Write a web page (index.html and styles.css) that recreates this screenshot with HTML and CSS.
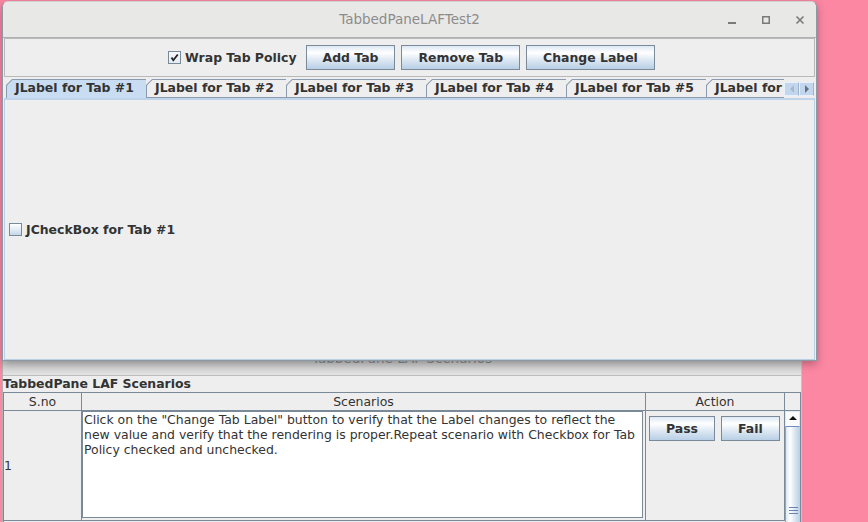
FILE: index.html
```html
<!DOCTYPE html>
<html>
<head>
<meta charset="utf-8">
<title>TabbedPaneLAFTest2</title>
<link rel="stylesheet" href="styles.css">
</head>
<body>
<div class="win back">
  <div class="back-title">TabbedPane LAF Scenarios</div>
  <div class="back-body">
    <div class="sc-label">TabbedPane LAF Scenarios</div>
    <div class="table">
      <div class="thead">
        <div class="th c-sno">S.no</div>
        <div class="th c-sc">Scenarios</div>
        <div class="th c-act">Action</div>
        <div class="th c-corner"></div>
      </div>
      <div class="trow">
        <div class="td c-sno sno">1</div>
        <div class="td c-sc sc">
          <div class="textarea">Click on the "Change Tab Label" button to verify that the Label changes to reflect the<br>new value and verify that the rendering is proper.Repeat scenario with Checkbox for Tab<br>Policy checked and unchecked.</div>
        </div>
        <div class="td c-act act">
          <button class="btn">Pass</button>
          <button class="btn">Fail</button>
        </div>
        <div class="vscroll">
          <div class="vs-up"><span class="tri-up"></span></div>
          <div class="vs-thumb"><span class="grip"></span><span class="grip"></span><span class="grip"></span></div>
        </div>
      </div>
    </div>
  </div>
</div>

<div class="win front">
  <div class="titlebar">
    <span class="title">TabbedPaneLAFTest2</span>
    <div class="wm">
      <svg viewBox="0 0 24 24" width="24" height="24"><path d="M8 15H16" stroke="#7a7a7a" stroke-width="2" fill="none"/></svg>
      <svg viewBox="0 0 24 24" width="24" height="24"><rect x="8.75" y="8.75" width="6.5" height="6.5" stroke="#7a7a7a" stroke-width="1.5" fill="none"/></svg>
      <svg viewBox="0 0 24 24" width="24" height="24"><path d="M8.5 8.5L15.5 15.5M15.5 8.5L8.5 15.5" stroke="#7a7a7a" stroke-width="1.6" fill="none"/></svg>
    </div>
  </div>
  <div class="frame-body">
    <div class="toolbar">
      <label class="chk wrap">
        <span class="box"><svg viewBox="0 0 11 11" width="11" height="11"><path d="M2.5 5.5L4.3 8.2L8.8 2.5" stroke="#222" stroke-width="1.8" fill="none"/></svg></span>
        Wrap Tab Policy
      </label>
      <button class="btn">Add Tab</button>
      <button class="btn">Remove Tab</button>
      <button class="btn">Change Label</button>
    </div>
    <div class="tabstrip">
      <div class="tabs">
        <div class="tab sel"><div class="tab-in">JLabel for Tab #1</div></div>
        <div class="tab"><div class="tab-in">JLabel for Tab #2</div></div>
        <div class="tab"><div class="tab-in">JLabel for Tab #3</div></div>
        <div class="tab"><div class="tab-in">JLabel for Tab #4</div></div>
        <div class="tab"><div class="tab-in">JLabel for Tab #5</div></div>
        <div class="tab"><div class="tab-in">JLabel for Tab #6</div></div>
      </div>
      <div class="tab-scroll">
        <span class="sbtn"><span class="tri-left"></span></span>
        <span class="sbtn"><span class="tri-right"></span></span>
      </div>
    </div>
    <div class="tab-content">
      <label class="chk">
        <span class="box plain"></span>
        JCheckBox for Tab #1
      </label>
    </div>
  </div>
</div>
</body>
</html>
```

FILE: styles.css
```css
* { box-sizing: border-box; }
html, body { margin: 0; padding: 0; }
body {
  width: 868px;
  height: 522px;
  overflow: hidden;
  position: relative;
  background: #fc87a3;
  font-family: "DejaVu Sans", sans-serif;
  font-size: 12.45px;
  color: #333;
}

.win { position: absolute; background: #eeeeee; }

/* ---------- back window ---------- */
.back {
  left: 2px;
  top: 340px;
  width: 800px;
  height: 200px;
  border-left: 1px solid #b0b0b0;
  border-right: 1px solid #c4c4c4;
  display: flex;
  flex-direction: column;
}
.back-title {
  height: 36px;
  flex: none;
  background: linear-gradient(to bottom, #c9c9c9 58%, #e3e3e3 100%);
  border-bottom: 1px solid #bdbdbd;
  display: flex;
  align-items: center;
  justify-content: center;
  font-size: 13.5px;
  color: #8c8c8c;
  padding-top: 1px;
}
.back-body { display: flex; flex-direction: column; }
.sc-label { height: 16px; line-height: 15px; font-weight: bold; color: #333; }
.table { border-left: 1px solid #7a8a99; width: 798px; }
.thead, .trow { display: flex; }
.th {
  height: 19px;
  border-top: 1px solid #7a8a99;
  border-bottom: 1px solid #7a8a99;
  border-right: 1px solid #7a8a99;
  background: #eeeeee;
  text-align: center;
  line-height: 17px;
}
.c-sno { width: 78px; flex: none; }
.c-sc { width: 564px; flex: none; }
.c-act { width: 139px; flex: none; }
.c-corner { width: 16px; flex: none; }
.td {
  height: 110px;
  border-right: 1px solid #7a8a99;
  border-bottom: 1px solid #7a8a99;
}
.sno { display: flex; align-items: center; padding-left: 0; }
.sc { padding: 0 2px 2px 0; }
.textarea {
  height: 100%;
  background: #fff;
  border: 1px solid #7a8a99;
  padding-left: 1px;
  line-height: 15px;
  white-space: nowrap;
  overflow: hidden;
  color: #333;
}
.act { display: flex; align-items: flex-start; gap: 6px; padding: 5px 0 0 3px; }

.vscroll {
  width: 16px;
  flex: none;
  height: 111px;
  border-right: 1px solid #7a8a99;
  display: flex;
  flex-direction: column;
}
.vs-up {
  height: 16px;
  flex: none;
  background: #fafbfd;
  border: 1px solid #e2e8f0;
  border-bottom: 1px solid #6f8cc0;
  display: flex;
  justify-content: center;
  padding-top: 4px;
}
.tri-up {
  width: 0; height: 0;
  border-left: 4px solid transparent;
  border-right: 4px solid transparent;
  border-bottom: 4px solid #111;
}
.vs-thumb {
  flex: 1;
  border-left: 1px solid #8ea6cf;
  background: linear-gradient(to right, #dde8f3 0%, #ffffff 30%, #dde8f3 60%, #b8cfe5 100%);
  display: flex;
  flex-direction: column;
  align-items: center;
  gap: 2px;
  padding-top: 80px;
}
.grip { width: 9px; height: 1px; background: #6c83b2; flex: none; }

/* ---------- buttons ---------- */
.btn {
  height: 25px;
  padding: 0 16px;
  margin: 0;
  border: 1px solid #7a8a99;
  border-radius: 0;
  background: linear-gradient(to bottom, #dde8f3 0%, #ffffff 30%, #dde8f3 60%, #b8cfe5 100%);
  font-family: "DejaVu Sans", sans-serif;
  font-weight: bold;
  font-size: 12.45px;
  color: #333;
  flex: none;
}

/* ---------- front window ---------- */
.front {
  left: 2px;
  top: 1px;
  width: 815px;
  height: 360px;
  border: 1px solid #8d98a5;
  border-top-color: #d0d0d0;
  border-radius: 6px 6px 0 0;
  box-shadow: 0 3px 10px rgba(0, 0, 0, 0.3);
  display: flex;
  flex-direction: column;
  overflow: hidden;
}
.titlebar {
  height: 36px;
  flex: none;
  background: #e8e8e7;
  border-bottom: 1px solid #b0b0b0;
  display: grid;
  grid-template-columns: 1fr auto 1fr;
  align-items: center;
}
.title { grid-column: 2; font-size: 13.5px; color: #8c8c8c; padding-bottom: 1px; }
.wm { grid-column: 3; justify-self: end; display: flex; gap: 10px; padding-right: 4px; }
.wm svg { display: block; }

.frame-body {
  flex: 1;
  display: flex;
  flex-direction: column;
  padding: 0 1px;
  min-height: 0;
}
.toolbar {
  height: 39px;
  flex: none;
  border: 1px solid #b9b9b9;
  display: flex;
  align-items: center;
  justify-content: center;
  gap: 6px;
  padding-left: 4px;
}
.chk { display: flex; align-items: center; gap: 4px; font-weight: bold; color: #333; white-space: nowrap; }
.wrap { margin-right: 3px; }
.box {
  width: 13px;
  height: 13px;
  border: 1px solid #7a8a99;
  background: linear-gradient(to bottom, #f4f7fb, #e4ebf3);
  display: flex;
  align-items: center;
  justify-content: center;
  flex: none;
}
.box svg { display: block; }
.box.plain { background: linear-gradient(to bottom, #ffffff 0%, #dde8f3 60%, #c6d7ea 100%); }

.tabstrip {
  height: 21px;
  flex: none;
  display: flex;
  padding-left: 2px;
}
.tabs {
  flex: 1;
  min-width: 0;
  display: flex;
  overflow: hidden;
  padding-top: 2px;
}
.tab {
  width: 140px;
  flex: none;
  height: 19px;
  padding: 1px 0 1px 1px;
  background: #8a9bb0;
  clip-path: polygon(0 6px, 6px 0, 100% 0, 100% 100%, 0 100%);
}
.tab.sel { padding-bottom: 0; }
.tab-in {
  height: 100%;
  background: #eeeeee;
  clip-path: polygon(0 5.4px, 5.4px 0, 100% 0, 100% 100%, 0 100%);
  padding-left: 8px;
  font-weight: bold;
  line-height: 16px;
  white-space: nowrap;
  color: #333;
}
.tab.sel .tab-in { background: #c8ddf2; }

.tab-scroll {
  flex: none;
  display: flex;
  width: 31px;
  height: 14px;
  margin-top: 5px;
}
.sbtn {
  width: 15px;
  height: 14px;
  flex: none;
  background: #c2d6ed;
  border: 1px solid #e8f0f9;
  border-right-color: #9db3cd;
  display: flex;
  align-items: center;
  justify-content: center;
}
.tri-left {
  width: 0; height: 0;
  border-top: 4px solid transparent;
  border-bottom: 4px solid transparent;
  border-right: 4px solid #a9b9ca;
}
.tri-right {
  width: 0; height: 0;
  border-top: 4px solid transparent;
  border-bottom: 4px solid transparent;
  border-left: 4px solid #66727f;
}

.tab-content {
  flex: 1;
  border: 1px solid #b8cfe5;
  border-top: 2px solid #bfd3ea;
  display: flex;
  align-items: center;
  padding-left: 4px;
}
```
